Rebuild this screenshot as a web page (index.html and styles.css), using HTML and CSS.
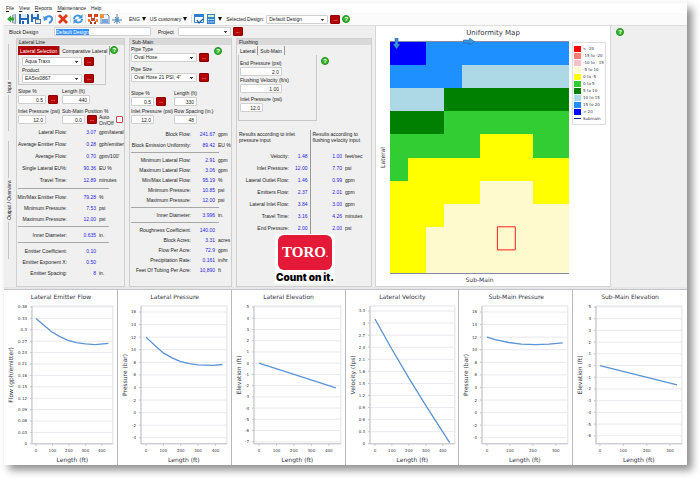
FILE: index.html
```html
<!DOCTYPE html>
<html lang="en">
<head>
    <meta charset="UTF-8">
    <meta name="viewport" content="width=device-width, initial-scale=1.0">
    <title>Toro Irrigation Design</title>
    <link rel="stylesheet" href="styles.css">
</head>
<body>
    <div class="app">
        <nav class="menu">
            <a href="#"><u>F</u>ile</a>
            <a href="#"><u>V</u>iew</a>
            <a href="#"><u>R</u>eports</a>
            <a href="#"><u>M</u>aintenance</a>
            <a href="#">Help</a>
        </nav>

        <div class="toolbar">
            <button class="tool" aria-label="Exit">
                <svg viewBox="0 0 10 10"><path d="M5 1l4-1v10l-4-1z" fill="#8d99a8"/><path d="M6 1.500l2-.5v8l-2-.5z" fill="#c9d2de"/><path d="M0 5l4-3.500v2h3v3H4v2z" fill="#35a535"/></svg>
            </button>
            <button class="tool" aria-label="Save">
                <svg viewBox="0 0 10 10"><path d="M0 0h9l1 1v9H0z" fill="#2265b5"/><path d="M2 0h6v4H2z" fill="#dcebfa"/><path d="M2 6h6v4H2z" fill="#fff"/><path d="M3 7h2v3H3z" fill="#2265b5"/></svg>
            </button>
            <button class="tool" aria-label="Save as">
                <svg viewBox="0 0 10 10"><path d="M0 0h8v8H0z" fill="#2a6dbb"/><path d="M2 0h4v3H2zM2 5h4v3H2z" fill="#e6f0fb"/><path d="M4 5h6v5H4z" fill="#5a7697"/><path d="M5 6h4v3H5z" fill="#e9eef5"/></svg>
            </button>
            <button class="tool" aria-label="Undo">
                <svg viewBox="0 0 10 10"><path d="M2 4c3-3 7-2 7 1 0 2-1 3-3 4" fill="none" stroke="#3f8fdc" stroke-width="2"/><path d="M0 2l1 5 4-2z" fill="#3f8fdc"/></svg>
            </button>
            <span class="sep"></span>
            <button class="tool" aria-label="Delete">
                <svg viewBox="0 0 10 10"><path d="M1 1l8 8M9 1L1 9" stroke="#e2371d" stroke-width="2.800"/></svg>
            </button>
            <span class="sep"></span>
            <button class="tool" aria-label="Refresh">
                <svg viewBox="0 0 10 10"><path d="M1 5c0-3 4-5 7-2M9 5c0 3-4 5-7 2" fill="none" stroke="#3f93dd" stroke-width="1.800"/><path d="M9.500 0v4.500H5zM.5 10V5.500H5z" fill="#3f93dd"/></svg>
            </button>
            <span class="sep"></span>
            <button class="tool" aria-label="Block layout">
                <svg viewBox="0 0 10 10"><path d="M2 2l6 6M8 2L2 8" stroke="#777"/><path d="M0 0h4v3H0zM6 0h4v3H6zM3 4h4v3H3z" fill="#d8431f"/><path d="M0 5h2v3H0zM8 5h2v3H8z" fill="#e88338"/><path d="M2 8h2v2H2zM6 8h2v2H6z" fill="#b52d16"/></svg>
            </button>
            <button class="tool" aria-label="Report">
                <svg viewBox="0 0 10 10"><path d="M1 0h6l2 2v8H1z" fill="#eef4fb" stroke="#6a8fbd"/><path d="M2 5h6v4H2z" fill="#7aa7db"/><path d="M0 0h4v4H0z" fill="#f0923a"/></svg>
            </button>
            <button class="tool" aria-label="Settings">
                <svg viewBox="0 0 10 10"><path d="M5 0v10M0 6h10M2 9l5-6M3 3l5 6" stroke="#607b97"/><circle cx="5" cy="6" r="2" fill="#4d98d9"/></svg>
            </button>
            <button class="drop lang">ENG<i></i></button>
            <button class="drop">US customary<i></i></button>
            <span class="sep"></span>
            <button class="tool" aria-label="Options">
                <svg viewBox="0 0 10 10"><path d="M.5.5h9v8h-9z" fill="#fff" stroke="#2d7fd0"/><path d="M0 0h10v3H0z" fill="#2d7fd0"/><path d="M3 6l2 3 4-4" fill="none" stroke="#235f9e" stroke-width="1.300"/></svg>
            </button>
            <button class="tool" aria-label="Calculator">
                <svg viewBox="0 0 10 10"><path d="M1 0h8v10H1z" fill="#3285cf"/><path d="M2 1h6v2H2z" fill="#d6efb9"/><path d="M2 5.500h6M2 8h6" stroke="#d7e9fa" stroke-dasharray="1.500 .7"/></svg>
            </button>
            <button class="drop" aria-label="More"><i></i></button>
            <label class="design-label" for="selected-design">Selected Design:</label>
            <select class="design-select" id="selected-design"><option>Default Design</option></select>
            <button class="more">...</button>
            <button class="help">?</button>
        </div>

        <main class="workspace">
            <div class="inputs">
                <div class="block-row">
                    <label for="block-design">Block Design</label>
                    <input class="block-name" id="block-design" value="Default Design">
                    <label for="project">Project</label>
                    <select class="project" id="project"><option></option></select>
                    <button class="more">...</button>
                </div>

                <div class="panels">
                    <div class="side-tabs">
                        <span class="side-tab">Input</span>
                        <span class="side-tab side-tab-long">Output / Overview</span>
                    </div>

                    <section class="panel lateral">
                        <h2>Lateral Line</h2>
                        <div class="tabs">
                            <button class="tab tab-red">Lateral Selection</button>
                            <button class="tab">Comparative Lateral</button>
                            <button class="help">?</button>
                        </div>
                        <div class="tab-body">
                            <div class="line">
                                <select aria-label="Lateral"><option>Aqua Traxx</option></select>
                                <button class="more">...</button>
                            </div>
                            <label for="product">Product</label>
                            <div class="line">
                                <select id="product"><option>EA5xx0867</option></select>
                                <button class="more">...</button>
                            </div>
                        </div>
                        <div class="pairs">
                            <div class="field">
                                <label for="lat-slope">Slope %</label>
                                <div class="line"><input class="wide" id="lat-slope" value="0.5"><button class="more">...</button></div>
                            </div>
                            <div class="field">
                                <label for="lat-length">Length (ft)</label>
                                <input class="wide" id="lat-length" value="440">
                            </div>
                            <div class="field">
                                <label for="lat-inlet">Inlet Pressure (psi)</label>
                                <input class="wide" id="lat-inlet" value="12.0">
                            </div>
                            <div class="field">
                                <label for="position">Sub-Main Position %</label>
                                <div class="line">
                                    <input id="position" value="0.0"><button class="more">...</button>
                                    <label class="auto" for="auto">Auto<br>On/Off</label>
                                    <input type="checkbox" id="auto">
                                </div>
                            </div>
                        </div>
                        <div class="results">
                            <table class="tall">
                                <tr><th>Lateral Flow:</th><td>3.07</td><td>gpm/lateral</td></tr>
                                <tr><th>Average Emitter Flow:</th><td>0.28</td><td>gph/emitter</td></tr>
                                <tr><th>Average Flow:</th><td>0.70</td><td>gpm/100'</td></tr>
                                <tr><th>Single Lateral EU%:</th><td>90.36</td><td>EU %</td></tr>
                                <tr><th>Travel Time:</th><td>12.89</td><td>minutes</td></tr>
                            </table>
                            <hr>
                            <table>
                                <tr><th>Min/Max Emitter Flow:</th><td>79.28</td><td>%</td></tr>
                                <tr><th>Minimum Pressure:</th><td>7.53</td><td>psi</td></tr>
                                <tr><th>Maximum Pressure:</th><td>12.00</td><td>psi</td></tr>
                            </table>
                            <hr>
                            <table>
                                <tr><th>Inner Diameter:</th><td>0.635</td><td>in.</td></tr>
                            </table>
                            <hr>
                            <table>
                                <tr><th>Emitter Coefficient:</th><td>0.10</td><td></td></tr>
                                <tr><th>Emitter Exponent X:</th><td>0.50</td><td></td></tr>
                                <tr><th>Emitter Spacing:</th><td>8</td><td>in.</td></tr>
                            </table>
                        </div>
                    </section>

                    <section class="panel submain">
                        <h2>Sub-Main</h2>
                        <div class="pipes">
                            <div class="field">
                                <label for="pipe-type">Pipe Type</label>
                                <div class="line">
                                    <select id="pipe-type"><option>Oval Hose</option></select>
                                    <button class="more">...</button>
                                </div>
                            </div>
                            <button class="help">?</button>
                            <div class="field">
                                <label for="pipe-size">Pipe Size</label>
                                <div class="line">
                                    <select id="pipe-size"><option>Oval Hose 21 PSI, 4"</option></select>
                                    <button class="more">...</button>
                                </div>
                            </div>
                        </div>
                        <div class="pairs">
                            <div class="field">
                                <label for="sub-slope">Slope %</label>
                                <div class="line"><input id="sub-slope" value="0.5"><button class="more">...</button></div>
                            </div>
                            <div class="field">
                                <label for="sub-length">Length (ft)</label>
                                <input id="sub-length" value="330">
                            </div>
                            <div class="field">
                                <label for="sub-inlet">Inlet Pressure (psi)</label>
                                <input id="sub-inlet" value="12.0">
                            </div>
                            <div class="field">
                                <label for="row-spacing">Row Spacing (in.)</label>
                                <input id="row-spacing" value="48">
                            </div>
                        </div>
                        <div class="results">
                            <table class="medium">
                                <tr><th>Block Flow:</th><td>241.67</td><td>gpm</td></tr>
                                <tr><th>Block Emission Uniformity:</th><td>89.42</td><td>EU %</td></tr>
                            </table>
                            <hr>
                            <table>
                                <tr><th>Minimum Lateral Flow:</th><td>2.91</td><td>gpm</td></tr>
                                <tr><th>Maximum Lateral Flow:</th><td>3.06</td><td>gpm</td></tr>
                                <tr><th>Min/Max Lateral Flow:</th><td>95.19</td><td>%</td></tr>
                                <tr><th>Minimum Pressure:</th><td>10.85</td><td>psi</td></tr>
                                <tr><th>Maximum Pressure:</th><td>12.00</td><td>psi</td></tr>
                            </table>
                            <hr>
                            <table>
                                <tr><th>Inner Diameter:</th><td>3.996</td><td>in.</td></tr>
                            </table>
                            <hr>
                            <table>
                                <tr><th>Roughness Coefficient:</th><td>140.00</td><td></td></tr>
                                <tr><th>Block Acres:</th><td>3.31</td><td>acres</td></tr>
                                <tr><th>Flow Per Acre:</th><td>72.9</td><td>gpm</td></tr>
                                <tr><th>Precipitation Rate:</th><td>0.161</td><td>in/hr</td></tr>
                                <tr><th>Feet Of Tubing Per Acre:</th><td>10,890</td><td>ft</td></tr>
                            </table>
                        </div>
                    </section>

                    <section class="panel flushing">
                        <h2>Flushing</h2>
                        <div class="tabs">
                            <button class="tab">Lateral</button>
                            <button class="tab">Sub-Main</button>
                        </div>
                        <div class="flush-row">
                            <div class="tab-body">
                                <div class="field">
                                    <label for="end-pressure">End Pressure (psi)</label>
                                    <input class="long" id="end-pressure" value="2.0">
                                </div>
                                <div class="field">
                                    <label for="velocity">Flushing Velocity (ft/s)</label>
                                    <input class="long" id="velocity" value="1.00">
                                </div>
                                <div class="field last">
                                    <label for="flush-inlet">Inlet Pressure (psi)</label>
                                    <input id="flush-inlet" value="12.0">
                                </div>
                            </div>
                            <button class="help">?</button>
                        </div>
                        <table class="compare">
                            <colgroup><col class="c-name"><col class="c-inlet"><col class="c-velocity"><col></colgroup>
                            <thead>
                                <tr><th colspan="2">Results according to inlet pressure input</th><th colspan="2">Results according to flushing velocity input</th></tr>
                            </thead>
                            <tbody>
                                <tr><th>Velocity:</th><td>1.48</td><td>1.00</td><td>feet/sec</td></tr>
                                <tr><th>Inlet Pressure:</th><td>12.00</td><td>7.70</td><td>psi</td></tr>
                                <tr><th>Lateral Outlet Flow:</th><td>1.46</td><td>0.99</td><td>gpm</td></tr>
                                <tr><th>Emitters Flow:</th><td>2.37</td><td>2.01</td><td>gpm</td></tr>
                                <tr><th>Lateral Inlet Flow:</th><td>3.84</td><td>3.00</td><td>gpm</td></tr>
                                <tr><th>Travel Time:</th><td>3.16</td><td>4.26</td><td>minutes</td></tr>
                                <tr><th>End Pressure:</th><td>2.00</td><td>2.00</td><td>psi</td></tr>
                            </tbody>
                        </table>
                        <div class="brand">
                            <div class="brand-logo">TORO<small>.</small></div>
                            <div class="brand-line">Count on it.</div>
                        </div>
                    </section>
                </div>
            </div>

            <section class="map">
                <h2>Uniformity Map</h2>
                <span class="map-y">Lateral</span>
                <div class="map-plot">
                    <svg class="map-cells" id="map-cells" viewBox="0 0 10 10" preserveAspectRatio="none"></svg>
                    <svg class="arrow arrow-down" viewBox="0 0 7 11"><path d="M2 0h3v6h2L3.500 11 0 6h2z" fill="#3c93e0" stroke="#1c5c9e" stroke-width=".5"/></svg>
                    <svg class="arrow arrow-right" viewBox="0 0 11 7"><path d="M0 2v3h6v2l5-3.500L6 0v2z" fill="#3c93e0" stroke="#1c5c9e" stroke-width=".5"/></svg>
                </div>
                <ul class="legend">
                    <li class="k-red">&lt; -20</li>
                    <li class="k-salmon">-15 to -20</li>
                    <li class="k-pink">-10 to - 15</li>
                    <li class="k-cream">-5 to 10</li>
                    <li class="k-yellow">0 to -5</li>
                    <li class="k-lime">0 to 5</li>
                    <li class="k-green">5 to 10</li>
                    <li class="k-light">10 to 15</li>
                    <li class="k-sky">15 to 20</li>
                    <li class="k-blue">&gt; 20</li>
                    <li class="k-line">Submain</li>
                </ul>
                <span class="map-x">Sub-Main</span>
            </section>

            <aside class="map-help">
                <button class="help">?</button>
            </aside>
        </main>

        <div class="splitter"></div>
        <div class="charts" id="charts"></div>
    </div>

    <script src="script.js"></script>
</body>
</html>
```

FILE: styles.css
```css
* {
    margin: 0;
    padding: 0;
    box-sizing: border-box;
}

body {
    font-family: "Liberation Sans", Arial, sans-serif;
    font-size: 5px;
    line-height: 8px;
    color: #222;
    background: white;
    padding: 3px 13px 13px 4px;
}

button, input, select {
    font: inherit;
    color: inherit;
}

.app {
    background: #efefef;
    box-shadow: 5px 5px 8px rgba(0, 0, 0, 0.45);
}

/* menu and toolbar */

.menu {
    display: flex;
    gap: 5px;
    height: 10px;
    padding: 1px 2px;
    background: white;
}

.menu a {
    color: #222;
    text-decoration: none;
}

.toolbar {
    display: flex;
    align-items: center;
    height: 13px;
    padding-left: 3px;
    background: #fbfbfb;
    border-bottom: 1px solid #ddd;
}

.tool {
    width: 10px;
    height: 10px;
    margin-right: 2px;
    border: none;
    background: none;
}

.tool svg {
    display: block;
    width: 10px;
    height: 10px;
}

.sep {
    width: 1px;
    height: 8px;
    margin-right: 2px;
    background: #ddd;
}

.drop {
    display: flex;
    align-items: center;
    gap: 2px;
    margin-right: 4px;
    border: none;
    background: none;
    white-space: nowrap;
}

.lang {
    margin-left: 5px;
}

.drop i {
    border: 2px solid transparent;
    border-top: 4px solid #111;
    border-bottom: none;
}

.design-label {
    width: 39px;
    white-space: nowrap;
}

.design-select {
    width: 62px;
    margin: 0 2px 0 1px;
}

.help {
    flex: none;
    width: 8px;
    height: 8px;
    border: 1px solid #1f8f1f;
    border-radius: 50%;
    background: #3bb82f;
    color: white;
    font-size: 6px;
    font-weight: bold;
    line-height: 6px;
}

.toolbar .help {
    margin-left: 2px;
}

.more {
    flex: none;
    width: 10px;
    height: 9px;
    border: 1px solid #8e0000;
    border-radius: 1px;
    background: #b50000;
    color: white;
    line-height: 5px;
}

/* form controls */

input, select {
    height: 9px;
    border: 1px solid #d0d0d0;
    border-radius: 1px;
    background: white;
}

input {
    width: 23px;
    padding-right: 2px;
    text-align: right;
    outline: none;
}

input.wide {
    width: 28px;
}

input.long {
    width: 42px;
}

select {
    appearance: none;
    padding-left: 2px;
    line-height: 7px;
    background-image: conic-gradient(from 315deg at 50% 100%, #444 90deg, transparent 0);
    background-image: linear-gradient(#444, #444), linear-gradient(#444, #444);
    background-size: 3px 1px, 1px 2px;
    background-position: right 3px top 3px, right 4px top 3px;
    background-repeat: no-repeat;
}

input[type="checkbox"] {
    appearance: none;
    flex: none;
    width: 7px;
    height: 7px;
    padding: 0;
    border: 1px solid #c4454d;
}

label {
    display: block;
    white-space: nowrap;
}

.line {
    display: flex;
    align-items: center;
    gap: 2px;
}

.field input, .field select {
    display: block;
}

/* workspace */

.workspace {
    display: grid;
    grid-template-columns: minmax(0, 371fr) minmax(0, 236fr) minmax(0, 76fr);
}

.inputs {
    display: flex;
    flex-direction: column;
}

.block-row {
    display: flex;
    align-items: center;
    height: 12px;
    padding: 0 0 1px 5px;
}

.block-row label:first-child {
    width: 45px;
}

.block-name {
    width: 97px;
    height: 9px;
    margin-right: 7px;
    padding-left: 1px;
    text-align: left;
}

.block-name::selection {
    background: #3390ff;
    color: white;
}

.project {
    width: 53px;
    margin: 0 2px 0 4px;
}

.panels {
    flex: 1;
    display: grid;
    grid-template-columns: 8px minmax(0, 109fr) minmax(0, 103fr) minmax(0, 136fr);
    gap: 4px;
    padding-right: 3px;
}

.side-tabs {
    display: flex;
    flex-direction: column;
    gap: 10px;
    padding: 6px 0 0 1px;
}

.side-tab {
    display: flex;
    align-items: center;
    justify-content: center;
    gap: 2px;
    height: 87px;
    writing-mode: vertical-rl;
    transform: rotate(180deg);
    white-space: nowrap;
}

.side-tab-long {
    height: 118px;
}

.side-tab::before, .side-tab::after {
    content: "";
    flex: 1;
    width: 1px;
    background: #c4c4c4;
}

.panel {
    border: 1px solid #cfcfcf;
    background: #f0f0f0;
}

.panel h2 {
    height: 6px;
    padding-left: 2px;
    background: #d9d9d9;
    font-size: 5px;
    font-weight: normal;
    line-height: 6px;
}

.tabs {
    display: flex;
    height: 10px;
    padding: 1px 0 0 1px;
}

.tab {
    padding: 0 2px;
    border: none;
    border-right: 1px solid #999;
    background: none;
    white-space: nowrap;
}

.tab-red {
    background: #b00000;
    color: white;
}

.tabs .help {
    margin-left: auto;
    margin-right: 7px;
}

.tab-body {
    border: 1px solid #c8c8c8;
    border-top: none;
}

.pairs {
    display: grid;
    padding-left: 1px;
}

/* lateral line */

.lateral .tab-body {
    width: 88px;
    height: 30px;
    margin-left: 1px;
    padding: 2px 3px 1px;
}

.lateral select {
    width: 60px;
}

.lateral .pairs {
    grid-template-columns: 44px 1fr;
    gap: 3px 0;
    padding-top: 2px;
}

.auto {
    margin: -2px 0;
    line-height: 6px;
}

.results table {
    width: 100%;
    table-layout: fixed;
    border-collapse: collapse;
}

.results th, .compare tbody th {
    font-weight: normal;
    text-align: right;
    white-space: nowrap;
}

.results tr {
    height: 11px;
}

.results .tall tr {
    height: 12px;
}

.results td, .compare td {
    text-align: right;
    color: #1f1fe0;
    white-space: nowrap;
}

.results td:last-child, .compare td:last-child {
    padding-left: 3px;
    text-align: left;
    color: #222;
}

.results hr {
    height: 1px;
    margin: 2px 15px 2px 1px;
    border: none;
    background: #a8a8a8;
}

.lateral .results {
    padding-top: 2px;
}

.lateral .results th {
    width: 50px;
}

.lateral .results td:nth-child(2) {
    width: 29px;
}

/* sub-main */

.pipes {
    display: grid;
    grid-template-columns: 1fr 17px;
    gap: 3px 0;
    padding-left: 1px;
}

.pipes .help {
    margin-top: 2px;
}

.pipes select {
    width: 66px;
}

.submain .pairs {
    grid-template-columns: 43px 1fr;
    gap: 1px 0;
    padding-top: 7px;
}

.submain .results {
    padding-top: 4px;
}

.submain .results tr {
    height: 10px;
}

.submain .results .medium tr {
    height: 11px;
}

.submain .results th {
    width: 61px;
}

.submain .results td:nth-child(2) {
    width: 24px;
}

.submain .results hr {
    margin-right: 12px;
}

/* flushing */

.flush-row {
    display: flex;
    gap: 4px;
}

.flush-row .help {
    margin-top: 2px;
}

.flushing .tab-body {
    width: 79px;
    height: 66px;
    margin-left: 1px;
    padding: 4px 1px;
}

.flushing .last {
    padding-top: 2px;
}

.compare {
    width: 100%;
    margin-top: 9px;
    table-layout: fixed;
    border-collapse: collapse;
}

.c-name {
    width: 52px;
}

.c-inlet {
    width: 21px;
}

.c-velocity {
    width: 32px;
}

.compare tr {
    height: 12px;
}

.compare thead tr {
    height: 20px;
}

.compare thead th {
    padding: 1px 0 0 2px;
    font-weight: normal;
    line-height: 6px;
    text-align: left;
    vertical-align: top;
}

.compare thead th:first-child, .compare td:nth-child(2) {
    padding-right: 2px;
    border-right: 1px solid #999;
}

.brand {
    width: 60px;
    margin: 0 0 0 38px;
    padding-top: 1px;
    background: white;
    text-align: center;
}

.brand-logo {
    width: 54px;
    height: 35px;
    margin: 0 auto;
    border-radius: 6px;
    background: #e31937;
    color: white;
    font: bold 15px/35px "Liberation Serif", serif;
}

.brand-logo small {
    font-size: 8px;
}

.brand-line {
    color: black;
    font: 900 10px/14px Inter, sans-serif;
    white-space: nowrap;
}

/* uniformity map */

.map {
    display: grid;
    grid-template-columns: 14px 1fr 41px;
    grid-template-rows: 15px 233px 12px;
    border: 1px solid #d4d4d4;
    border-top: none;
    background: white;
    color: #333344;
    font: 6px/8px "DejaVu Sans", sans-serif;
}

.map h2 {
    grid-column: 1 / -1;
    padding-top: 3px;
    font-size: 7px;
    font-weight: normal;
    text-align: center;
}

.map-y {
    align-self: center;
    justify-self: center;
    writing-mode: vertical-rl;
    transform: rotate(180deg);
}

.map-plot {
    position: relative;
    border: 1px solid #8888a8;
    border-width: 1px 0;
}

.map-cells {
    display: block;
    width: 100%;
    height: 100%;
    shape-rendering: crispEdges;
}

.arrow {
    position: absolute;
    top: -4px;
}

.arrow-down {
    left: 3px;
    width: 7px;
    height: 11px;
}

.arrow-right {
    left: 41%;
    width: 12px;
    height: 7px;
}

.legend {
    align-self: start;
    margin: 1px 4px 0 3px;
    padding: 2px 1px;
    border: 1px solid #ddd;
    list-style: none;
    font-size: 4px;
    white-space: nowrap;
}

.legend li {
    display: flex;
    align-items: center;
    gap: 2px;
    line-height: 7px;
}

.legend li::before {
    content: "";
    flex: none;
    width: 7px;
    height: 6px;
}

.legend .k-line::before {
    height: 1px;
    background: #22229a;
}

.legend .k-red::before { background: #ff0000; }
.legend .k-salmon::before { background: #fa8072; }
.legend .k-pink::before { background: #ffc0cb; }
.legend .k-cream::before { background: #fffacd; }
.legend .k-yellow::before { background: #ffff00; }
.legend .k-lime::before { background: #32cd32; }
.legend .k-green::before { background: #008000; }
.legend .k-light::before { background: #add8e6; }
.legend .k-sky::before { background: #1e90ff; }
.legend .k-blue::before { background: #0000ff; }

.map-x {
    grid-column: 2;
    padding-top: 2px;
    text-align: center;
}

.map-help {
    padding: 2px 5px;
}

.splitter {
    height: 3px;
    background: #e6e6e6;
    border-bottom: 1px solid #c4c4cc;
}

/* charts */

.charts {
    display: grid;
    grid-template-columns: repeat(6, minmax(0, 1fr));
    background: white;
    color: #333344;
    font: 6px/14px "DejaVu Sans", sans-serif;
    text-align: center;
}

.chart + .chart {
    box-shadow: -1px 0 #b8b8c4;
}

.chart svg {
    display: block;
    width: 100%;
}

.chart text {
    fill: #333344;
    text-anchor: middle;
}

.chart .tick {
    font-size: 4px;
}

.chart .tick-y {
    text-anchor: end;
}

.chart .grid {
    stroke: #e9e9ee;
}

.chart .axis {
    fill: none;
    stroke: #c4c4c8;
}

.chart .frame {
    fill: none;
    stroke: #e2e2e6;
}

.chart .curve {
    fill: none;
    stroke: #5b93d3;
    stroke-width: 1.3;
}
```

FILE: script.js
```js
// Uniformity map: one letter per cell
const COLORS = {
    B: '#0000ff', S: '#1e90ff', L: '#add8e6', D: '#008000',
    G: '#32cd32', Y: '#ffff00', C: '#fffacd'
};

const MAP = [
    'BBSSSSSSSS',
    'SSSSLLLLLL',
    'LLLDDDDDDD',
    'DDDGGGGGGG',
    'GGGGGYYYGG',
    'GYYYYYYYYY',
    'YYYYYCCCYY',
    'YYYCCCCCCC',
    'YYCCCCCCCC',
    'YYCCCCCCCC'
];

let cells = '';
MAP.forEach((row, y) => {
    [...row].forEach((c, x) => {
        cells += `<rect x="${x}" y="${y}" width="1" height="1" fill="${COLORS[c]}"/>`;
    });
});
cells += '<rect x="6" y="8" width="1" height="1" fill="none" stroke="#ff2020" vector-effect="non-scaling-stroke"/>';
document.getElementById('map-cells').innerHTML = cells;

// left/x0/x100: plot edge, pixel of 0 and pixels per 100 ft
// y: [first label, last label, step, pixel of first, pixel of last]
const CHARTS = [
    {
        title: 'Lateral Emitter Flow', unit: 'Flow (gph/emitter)', left: 28, x0: 32, x100: 16.5, xmax: 400,
        y: [0.36, 0, 0.03, 17, 154],
        data: [[0, 0.33], [45, 0.313], [95, 0.295], [145, 0.282], [195, 0.272], [245, 0.266], [300, 0.263], [360, 0.261], [440, 0.264]]
    },
    {
        title: 'Lateral Pressure', unit: 'Pressure (bar)', left: 23, x0: 28, x100: 17.4, xmax: 400,
        y: [16, -4, 2, 22, 148],
        data: [[0, 12], [50, 10.7], [100, 9.5], [150, 8.7], [200, 8.1], [250, 7.8], [300, 7.6], [385, 7.5], [440, 7.65]]
    },
    {
        title: 'Lateral Elevation', unit: 'Elevation (ft)', left: 22, x0: 27, x100: 17.5, xmax: 400,
        y: [5, -7, 1, 17, 152],
        data: [[0, 0], [440, -2.2]]
    },
    {
        title: 'Lateral Velocity', unit: 'Velocity (fps)', left: 24, x0: 29, x100: 17, xmax: 400,
        y: [3.3, 0, 0.3, 21, 154],
        data: [[0, 3.1], [100, 2.35], [200, 1.63], [300, 0.95], [440, 0.03]]
    },
    {
        title: 'Sub-Main Pressure', unit: 'Pressure (bar)', left: 23, x0: 28, x100: 23, xmax: 300,
        y: [16, -4, 2, 22, 148],
        data: [[0, 12], [36, 11.6], [95, 11.15], [150, 10.9], [210, 10.8], [270, 10.9], [330, 11.1]]
    },
    {
        title: 'Sub-Main Elevation', unit: 'Elevation (ft)', left: 23, x0: 27, x100: 23.4, xmax: 300,
        y: [5, -6, 1, 17, 146],
        data: [[0, 0], [330, -1.65]]
    }
];

const TOP = 16;
const BOTTOM = 154;
const RIGHT = 109;

function drawChart(c) {
    const [first, last, step, p1, p2] = c.y;
    const px = v => c.x0 + v / 100 * c.x100;
    const py = v => p1 + (first - v) / (first - last) * (p2 - p1);
    let s = `<rect class="frame" x="${c.left}" y="${TOP}" width="${RIGHT - c.left}" height="${BOTTOM - TOP}"/>`;

    const count = Math.round((first - last) / step);
    for (let i = 0; i <= count; i++) {
        const v = Number((first - i * step).toFixed(2));
        s += `<path class="grid" d="M${c.left} ${py(v)}H${RIGHT}"/>`;
        s += `<path class="axis" d="M${c.left - 2} ${py(v)}h2"/>`;
        s += `<text class="tick tick-y" x="${c.left - 5}" y="${py(v) + 1.5}">${v}</text>`;
    }
    for (let v = 0; v <= c.xmax; v += 100) {
        s += `<path class="axis" d="M${px(v)} ${BOTTOM}v2"/>`;
        s += `<text class="tick" x="${px(v)}" y="162">${v}</text>`;
    }
    s += `<path class="axis" d="M${c.left} ${TOP}V${BOTTOM}H${RIGHT}"/>`;
    s += `<path class="curve" d="M${c.data.map(d => px(d[0]) + ' ' + py(d[1])).join('L')}"/>`;
    s += `<text x="${(c.left + RIGHT) / 2}" y="172">Length (ft)</text>`;
    s += `<text transform="translate(9 85) rotate(-90)">${c.unit}</text>`;

    return `<figure class="chart"><figcaption>${c.title}</figcaption><svg viewBox="0 14 114 161">${s}</svg></figure>`;
}

document.getElementById('charts').innerHTML = CHARTS.map(drawChart).join('');
document.getElementById('block-design').select();
```
